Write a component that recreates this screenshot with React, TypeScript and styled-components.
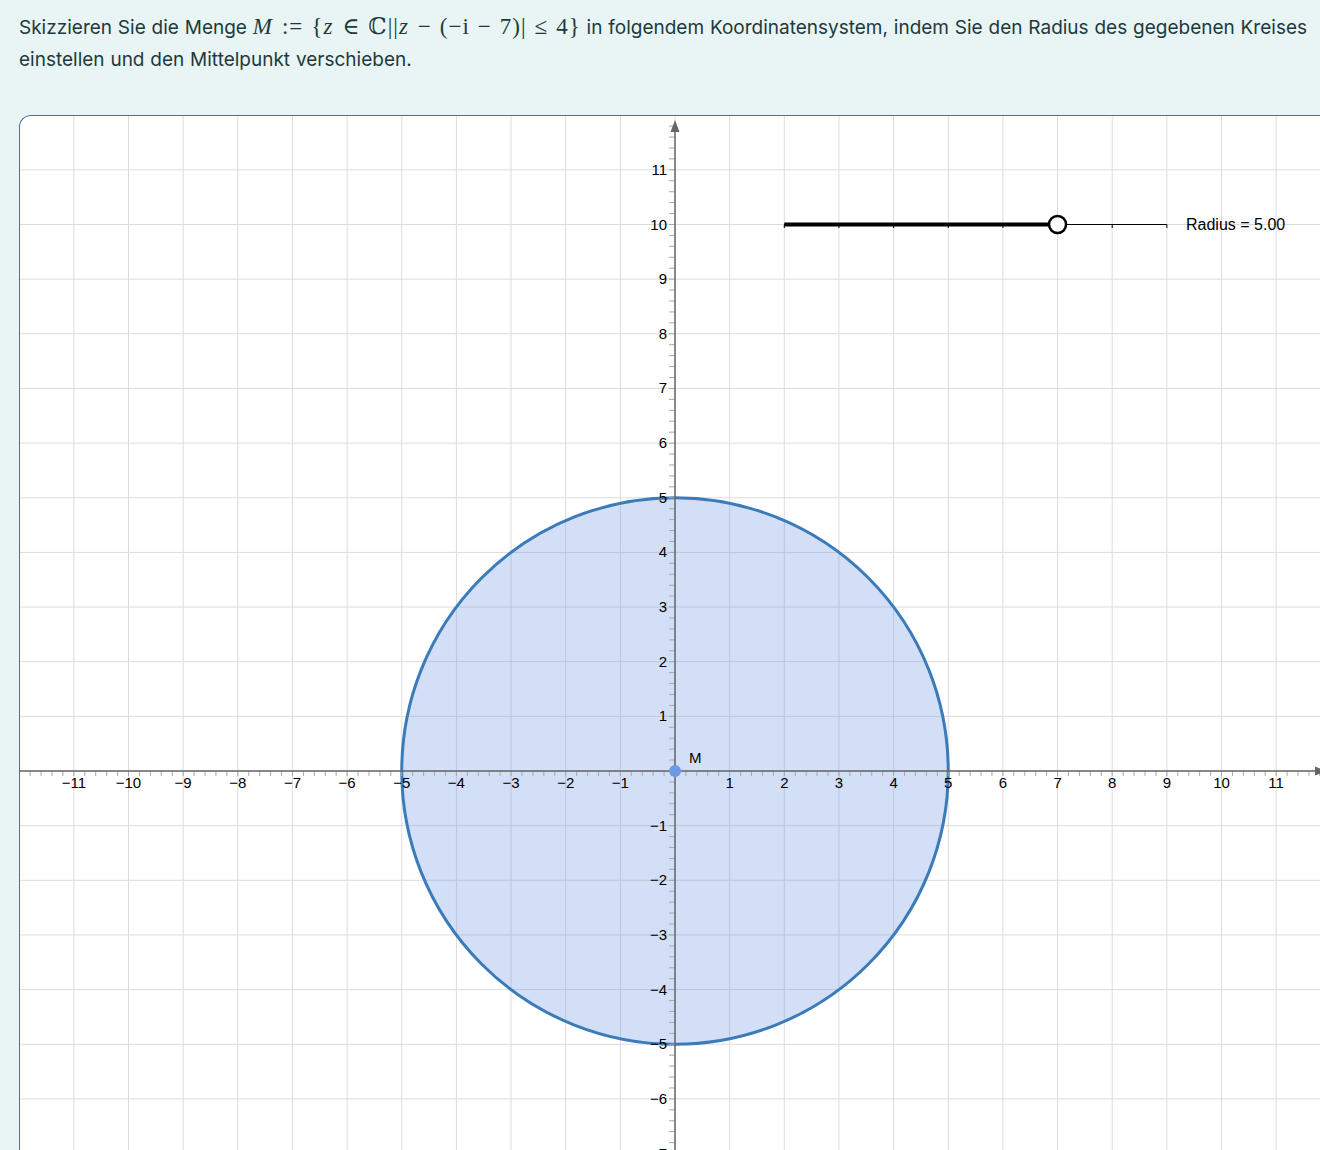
import styled, { createGlobalStyle } from 'styled-components';

// one unit of the coordinate system in pixels, origin in page coordinates
const UNIT = 54.65;
const OX = 675;
const OY = 770;

// panel inner box (page coordinates)
const PANEL_X = 20;
const PANEL_Y = 115;
const PANEL_W = 1340;
const PANEL_H = 1080;

const px = (v: number) => OX + v * UNIT;
const py = (v: number) => OY - v * UNIT;

const minus = (n: number) => (n < 0 ? `\u2212${Math.abs(n)}` : `${n}`);

const GlobalStyle = createGlobalStyle`
  html, body {
    margin: 0;
    padding: 0;
    background: #e9f4f5;
    overflow: hidden;
  }
`;

export default function App() {
  const xs: number[] = [];
  for (let k = -12; k <= 12; k++) xs.push(k);
  const ys: number[] = [];
  for (let k = -8; k <= 12; k++) ys.push(k);

  const minorX: number[] = [];
  for (let k = -60; k <= 60; k++) minorX.push(k / 5);
  const minorY: number[] = [];
  for (let k = -40; k <= 60; k++) minorY.push(k / 5);

  const sliderTicks = [2, 3, 4, 5, 6, 7, 8, 9];

  return (
    <>
      <GlobalStyle />
      <Page>
        <Prompt>
          Skizzieren Sie die Menge{' '}
          <MathText>
            <Var>M</Var>
            <Op>:=</Op>
            {'{'}
            <Var>z</Var>
            <Op>∈</Op>ℂ||<Var>z</Var>
            <Op>−</Op>(−i<Op>−</Op>7)|<Op>≤</Op>4{'}'}
          </MathText>{' '}
          in folgendem Koordinatensystem, indem Sie den Radius des gegebenen
          Kreises einstellen und den Mittelpunkt verschieben.
        </Prompt>
        <GraphPanel>
          <svg
            width={PANEL_W}
            height={PANEL_H}
            viewBox={`${PANEL_X} ${PANEL_Y} ${PANEL_W} ${PANEL_H}`}
          >
            {/* grid */}
            {xs.map((k) => (
              <line
                key={`gx${k}`}
                x1={px(k)}
                x2={px(k)}
                y1={PANEL_Y}
                y2={PANEL_Y + PANEL_H}
                stroke="#dcdcdc"
                strokeWidth={1}
              />
            ))}
            {ys.map((k) => (
              <line
                key={`gy${k}`}
                x1={PANEL_X}
                x2={PANEL_X + PANEL_W}
                y1={py(k)}
                y2={py(k)}
                stroke="#dcdcdc"
                strokeWidth={1}
              />
            ))}

            {/* circle */}
            <circle
              cx={px(0)}
              cy={py(0)}
              r={5 * UNIT}
              fill="#6c96e6"
              fillOpacity={0.3}
              stroke="#3b7bb9"
              strokeWidth={3}
            />

            {/* minor ticks */}
            {minorX.map((v) => (
              <line
                key={`tx${v}`}
                x1={px(v)}
                x2={px(v)}
                y1={OY}
                y2={OY + 5}
                stroke="#a8a8a8"
                strokeWidth={1}
              />
            ))}
            {minorY.map((v) => (
              <line
                key={`ty${v}`}
                x1={OX - 6}
                x2={OX}
                y1={py(v)}
                y2={py(v)}
                stroke="#a8a8a8"
                strokeWidth={1}
              />
            ))}

            {/* axes */}
            <line x1={PANEL_X} x2={1316} y1={OY} y2={OY} stroke="#666" strokeWidth={1.5} />
            <polygon points={`1327,${OY} 1315,${OY - 4.5} 1315,${OY + 4.5}`} fill="#666" />
            <line x1={OX} x2={OX} y1={PANEL_Y + PANEL_H} y2={130} stroke="#666" strokeWidth={1.5} />
            <polygon points={`${OX},119 ${OX - 4.5},131 ${OX + 4.5},131`} fill="#666" />

            {/* axis labels */}
            {xs
              .filter((k) => k !== 0 && Math.abs(k) <= 11)
              .map((k) => (
                <AxisLabel key={`lx${k}`} x={px(k)} y={OY + 17} textAnchor="middle">
                  {minus(k)}
                </AxisLabel>
              ))}
            {ys
              .filter((k) => k !== 0 && k <= 11)
              .map((k) => (
                <AxisLabel key={`ly${k}`} x={OX - 8} y={py(k) + 5} textAnchor="end">
                  {minus(k)}
                </AxisLabel>
              ))}

            {/* centre point */}
            <circle cx={OX} cy={OY} r={6} fill="#6b9be8" />
            <AxisLabel x={689} y={762}>
              M
            </AxisLabel>

            {/* radius slider */}
            {sliderTicks.map((k) => (
              <line
                key={`st${k}`}
                x1={px(k)}
                x2={px(k)}
                y1={py(10)}
                y2={py(10) + 3.5}
                stroke="#000"
                strokeWidth={1}
              />
            ))}
            <line x1={px(2)} x2={px(9)} y1={py(10)} y2={py(10)} stroke="#000" strokeWidth={1} />
            <line x1={px(2)} x2={px(7)} y1={py(10)} y2={py(10)} stroke="#000" strokeWidth={4} />
            <circle cx={px(7)} cy={py(10)} r={8.5} fill="#fff" stroke="#000" strokeWidth={2.5} />
            <SliderLabel x={1186} y={py(10) + 5}>
              Radius = 5.00
            </SliderLabel>
          </svg>
        </GraphPanel>
      </Page>
    </>
  );
}

const Page = styled.div`
  padding: 11px 0 0 19px;
  width: 1360px;
`;

const Prompt = styled.p`
  margin: 0;
  width: 1340px;
  font-family: Inter, 'Noto Sans', sans-serif;
  font-size: 19px;
  line-height: 32px;
  color: #1c3a3d;
  word-spacing: 0.5px;
`;

const MathText = styled.span`
  font-family: 'Liberation Serif', 'DejaVu Serif', serif;
  font-size: 23px;
  color: #1c3a3d;
  letter-spacing: 1px;
  word-spacing: 0;
`;

const Var = styled.i`
  font-style: italic;
  margin-right: 1px;
`;

const Op = styled.span`
  margin: 0 8px;
`;

const GraphPanel = styled.div`
  margin-top: 39px;
  width: ${PANEL_W}px;
  height: ${PANEL_H}px;
  background: #fff;
  border: 1px solid #4a70a8;
  border-right: none;
  border-bottom: none;
  border-radius: 12px 0 0 0;
  overflow: hidden;

  svg {
    display: block;
  }
`;

const AxisLabel = styled.text`
  font-family: 'Liberation Sans', Arial, sans-serif;
  font-size: 15px;
  fill: #000;
`;

const SliderLabel = styled(AxisLabel)`
  font-size: 16px;
`;
